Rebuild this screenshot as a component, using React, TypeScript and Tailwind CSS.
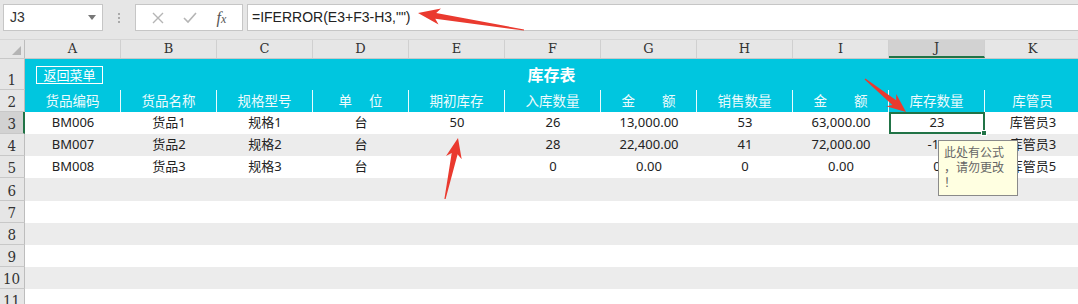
import React from 'react';

const cols = ['A', 'B', 'C', 'D', 'E', 'F', 'G', 'H', 'I', 'J', 'K'];
const heads = ['货品编码', '货品名称', '规格型号', '单　 位', '期初库存', '入库数量', '金　　额', '销售数量', '金　　额', '库存数量', '库管员'];
const data = [
  ['BM006', '货品1', '规格1', '台', '50', '26', '13,000.00', '53', '63,000.00', '23', '库管员3'],
  ['BM007', '货品2', '规格2', '台', '', '28', '22,400.00', '41', '72,000.00', '-13', '库管员3'],
  ['BM008', '货品3', '规格3', '台', '', '0', '0.00', '0', '0.00', '0', '库管员5'],
];
// empty rows 6..11 with heights
const emptyRows = [
  { n: 6, h: 'h-[23px]', grey: true },
  { n: 7, h: 'h-[22px]', grey: false },
  { n: 8, h: 'h-[22px]', grey: true },
  { n: 9, h: 'h-[22px]', grey: false },
  { n: 10, h: 'h-[22px]', grey: true },
  { n: 11, h: 'h-[22px]', grey: false },
];

// arrow polygon from tail to tip
function arrow(tx: number, ty: number, px: number, py: number, headLen: number, headW: number, neckW: number, tailW: number) {
  const dx = px - tx;
  const dy = py - ty;
  const len = Math.sqrt(dx * dx + dy * dy);
  const ux = dx / len;
  const uy = dy / len;
  const nx = -uy;
  const ny = ux;
  const bx = px - ux * headLen;
  const by = py - uy * headLen;
  const nbx = px - ux * (headLen - 4);
  const nby = py - uy * (headLen - 4);
  const pts = [
    [tx + nx * tailW, ty + ny * tailW],
    [nbx + nx * neckW, nby + ny * neckW],
    [bx + nx * headW, by + ny * headW],
    [px, py],
    [bx - nx * headW, by - ny * headW],
    [nbx - nx * neckW, nby - ny * neckW],
    [tx - nx * tailW, ty - ny * tailW],
  ];
  return pts.map((p) => p[0].toFixed(1) + ',' + p[1].toFixed(1)).join(' ');
}

function RowNum({ n, h, active }: { n: number; h: string; active?: boolean }) {
  return (
    <div
      className={`w-[25px] shrink-0 ${h} flex items-end justify-center pb-[1px] border-b border-[#c8c8c8] text-[15px] text-[#333] ${
        active ? 'bg-[#d2d2d2] border-r-2 border-r-[#217346]' : 'bg-[#e6e6e6] border-r border-r-[#bdbdbd]'
      }`}
      style={{ fontFamily: '"DejaVu Serif", "Liberation Serif", serif' }}
    >
      <span className="scale-x-90 leading-none">{n}</span>
    </div>
  );
}

export default function App() {
  return (
    <div
      className="relative w-[1078px] h-[304px] overflow-hidden bg-white"
      style={{ fontFamily: '"Noto Sans", "Noto Sans CJK SC", sans-serif' }}
    >
      {/* formula bar */}
      <div className="h-[40px] bg-[#e6e6e6] flex items-start pt-[4px] border-b border-[#d6d6d6]">
        <div className="ml-[3px] w-[100px] h-[27px] bg-white border border-[#c6c6c6] flex items-center justify-between px-[6px]">
          <span className="text-[14px] text-[#333]" style={{ fontFamily: '"Liberation Sans", sans-serif' }}>J3</span>
          <span className="w-0 h-0 border-l-[4px] border-r-[4px] border-t-[5px] border-l-transparent border-r-transparent border-t-[#777]" />
        </div>
        <div className="w-[32px] h-[27px] flex flex-col items-center justify-center gap-[2px]">
          <span className="w-[2px] h-[2px] bg-[#aaa]" />
          <span className="w-[2px] h-[2px] bg-[#aaa]" />
          <span className="w-[2px] h-[2px] bg-[#aaa]" />
        </div>
        <div className="w-[108px] h-[27px] bg-white border border-[#c6c6c6] flex items-center justify-around px-[6px]">
          <svg width="12" height="12" viewBox="0 0 12 12">
            <path d="M1 1 L11 11 M11 1 L1 11" stroke="#b5b5b5" strokeWidth="1.4" />
          </svg>
          <svg width="14" height="12" viewBox="0 0 14 12">
            <path d="M1 6 L5 10 L13 1" stroke="#b5b5b5" strokeWidth="1.6" fill="none" />
          </svg>
          <span className="text-[16px] italic text-[#555] leading-none" style={{ fontFamily: '"Liberation Serif", serif' }}>
            f<span className="text-[12px]">x</span>
          </span>
        </div>
        <div className="ml-[4px] flex-1 h-[27px] bg-white border border-[#c6c6c6] border-r-0 flex items-center pl-[4px]">
          <span className="text-[14px] text-[#222]" style={{ fontFamily: '"Liberation Sans", sans-serif' }}>
            =IFERROR(E3+F3-H3,"")
          </span>
        </div>
      </div>

      {/* column header */}
      <div className="flex h-[19px] bg-[#e6e6e6] border-b border-[#c8c8c8]">
        <div className="w-[25px] shrink-0 border-r border-[#bdbdbd] flex items-end justify-end pr-[3px] pb-[3px]">
          <svg width="9" height="9" viewBox="0 0 9 9">
            <polygon points="9,0 9,9 0,9" fill="#b4b4b4" />
          </svg>
        </div>
        {cols.map((c) => (
          <div
            key={c}
            className={`w-[96px] shrink-0 flex items-center justify-center text-[13px] text-[#333] border-r border-[#d0d0d0] ${
              c === 'J' ? 'bg-[#d2d2d2] border-b-2 border-b-[#217346]' : ''
            }`}
            style={{ fontFamily: '"DejaVu Serif", "Liberation Serif", serif' }}
          >
            {c}
          </div>
        ))}
      </div>

      {/* row 1 */}
      <div className="flex">
        <RowNum n={1} h="h-[31px]" />
        <div className="flex-1 h-[31px] bg-[#00c6df] relative flex items-center justify-center">
          <div className="absolute left-[11px] top-[7px] h-[18px] w-[67px] border border-white flex items-center justify-center text-[13px] text-white leading-none">
            返回菜单
          </div>
          <span className="text-[16px] font-bold text-white">库存表</span>
        </div>
      </div>

      {/* row 2 */}
      <div className="flex">
        <RowNum n={2} h="h-[22px]" />
        {heads.map((t, i) => (
          <div
            key={i}
            className="w-[96px] shrink-0 h-[22px] bg-[#00c6df] border-r border-[#e8fbfe] flex items-center justify-center text-[13.5px] text-[#eefbfd] whitespace-pre"
          >
            {t}
          </div>
        ))}
      </div>

      {/* data rows */}
      {data.map((row, r) => (
        <div key={r} className={`flex ${r === 1 ? 'bg-[#ececec]' : 'bg-white'}`}>
          <RowNum n={r + 3} h="h-[22px]" active={r === 0} />
          {row.map((v, i) => (
            <div
              key={i}
              className={`w-[96px] shrink-0 h-[22px] flex items-center justify-center text-[13px] text-[#222] ${
                r === 0 && i === 9 ? 'relative border-2 border-[#217346]' : ''
              }`}
            >
              {v}
              {r === 0 && i === 9 && (
                <span className="absolute right-[-4px] bottom-[-4px] w-[6px] h-[6px] bg-[#217346] border border-white" />
              )}
            </div>
          ))}
        </div>
      ))}

      {/* empty rows */}
      {emptyRows.map((er) => (
        <div key={er.n} className={`flex ${er.grey ? 'bg-[#ececec]' : 'bg-white'}`}>
          <RowNum n={er.n} h={er.h} />
          <div className="flex-1" />
        </div>
      ))}

      {/* comment */}
      <div className="absolute left-[938px] top-[140px] w-[80px] h-[56px] bg-[#ffffe1] border border-[#8a8a8a] px-[5px] pt-[4px] text-[12px] leading-[15px] text-[#666]">
        <div>此处有公式</div>
        <div>，请勿更改</div>
        <div>！</div>
      </div>

      {/* arrows */}
      <svg className="absolute left-0 top-0 pointer-events-none" width="1078" height="304">
        <polygon points={arrow(524, 30, 418, 13, 22, 8, 3, 0.6)} fill="#ea3a2f" />
        <polygon points={arrow(445, 199, 458, 138, 20, 8, 3, 0.6)} fill="#ea3a2f" />
        <polygon points={arrow(865, 79, 906, 112, 19, 8, 3, 0.6)} fill="#ea3a2f" />
      </svg>
    </div>
  );
}
